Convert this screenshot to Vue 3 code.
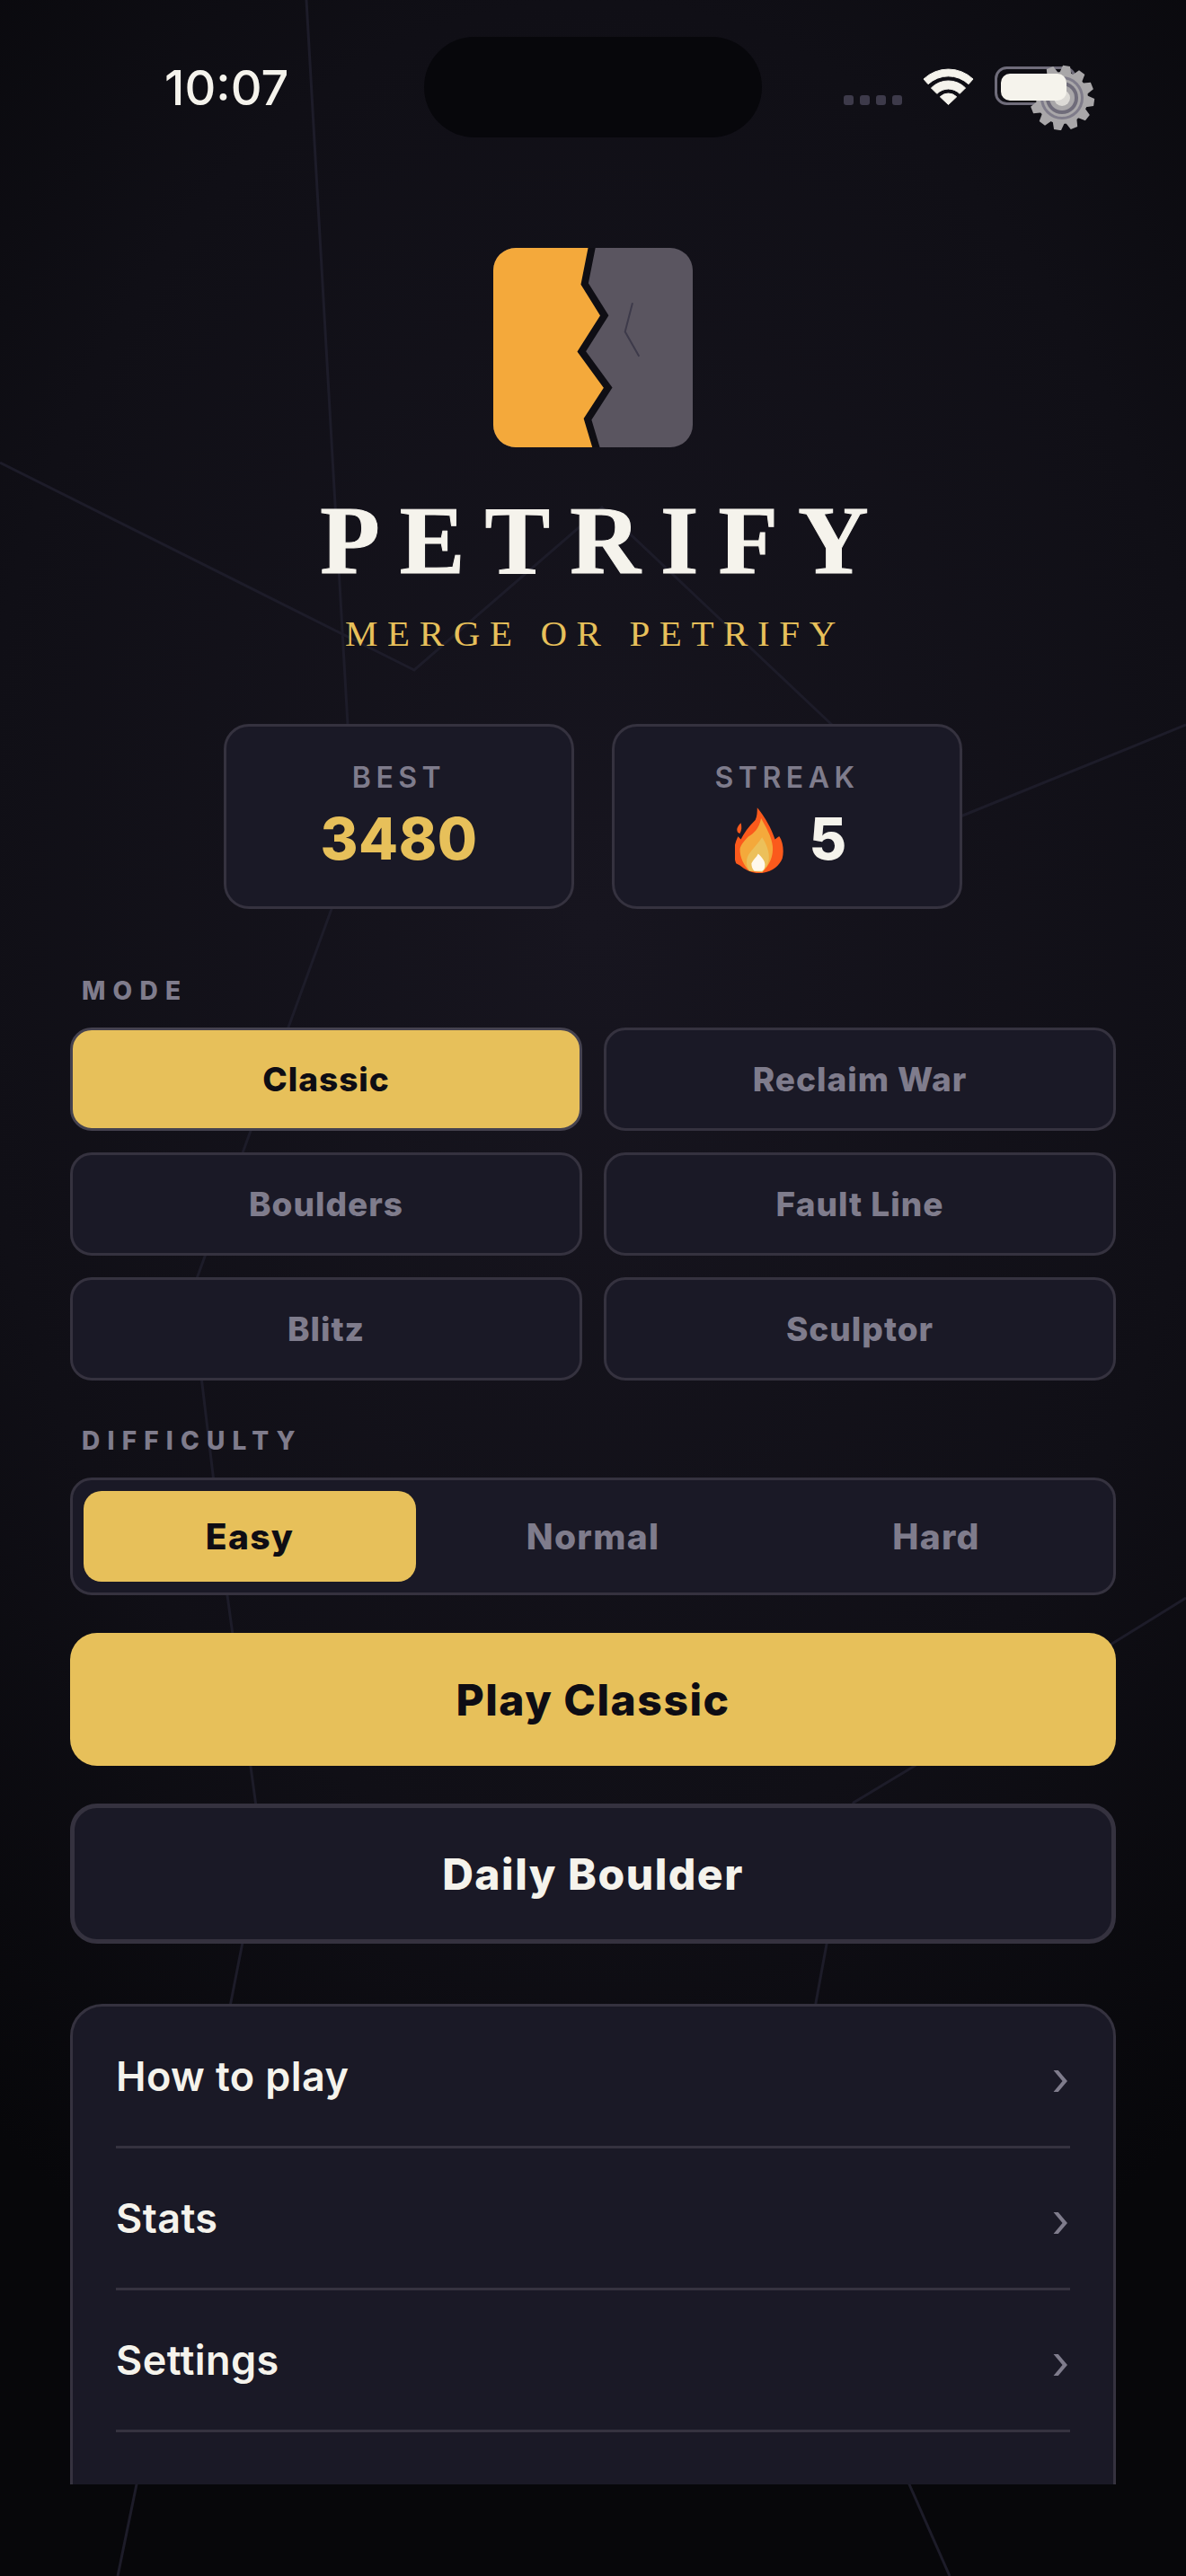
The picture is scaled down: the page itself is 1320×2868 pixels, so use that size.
<script setup>
const modes = [
  { name: 'Classic', active: true },
  { name: 'Reclaim War' },
  { name: 'Boulders' },
  { name: 'Fault Line' },
  { name: 'Blitz' },
  { name: 'Sculptor' },
]
const levels = [
  { name: 'Easy', active: true },
  { name: 'Normal' },
  { name: 'Hard' },
]
const menu = ['How to play', 'Stats', 'Settings']
const cracks = [
  '341,0 387,807 393,920 369,1012 213,1440 253,1776 291,2055 152,2766 131,2868',
  '0,515 461,746 670,565 926,807',
  '1320,807 1069,909',
  '1320,1779 1018,1966 950,2007 941,2050 908,2230 895,2400 1012,2766 1057,2868',
]
const teeth = Array.from({ length: 12 }, (_, i) => i * 30)
</script>

<template>
  <div class="app">
    <svg class="cracks" width="1320" height="2868" viewBox="0 0 1320 2868" aria-hidden="true">
      <polyline v-for="(c, i) in cracks" :key="i" :points="c" />
    </svg>

    <div class="screen">
      <header class="status">
        <span class="time">10:07</span>
        <span class="island"></span>
        <div class="status-icons">
          <div class="signal"><i></i><i></i><i></i><i></i></div>
          <svg class="wifi" width="57" height="42" viewBox="0 0 57 42">
            <g fill="#f5f3ec" stroke="#f5f3ec" stroke-width="1" stroke-linejoin="round">
              <path d="M1 13 A40 40 0 0 1 56 13 L51 18.7 A33 33 0 0 0 6 18.7 Z" />
              <path d="M9.4 22.9 A27 27 0 0 1 47.6 22.9 L41.2 29.3 A18 18 0 0 0 15.8 29.3 Z" />
              <path d="M19.3 32.8 A13 13 0 0 1 37.7 32.8 L28.5 41.5 Z" />
            </g>
          </svg>
          <svg class="battery" width="113" height="80" viewBox="0 0 113 80">
            <rect x="1.500" y="10.500" width="88" height="40" rx="12" fill="none" stroke="#6f6c7a" stroke-width="3" />
            <g transform="translate(75 44)">
              <polygon v-for="a in teeth" :key="a" points="-7,-26 -4,-36 4,-36 7,-26" fill="#a9a7a9" :transform="`rotate(${a + 8})`" />
              <circle r="29" fill="#a9a7a9" />
              <circle r="24" fill="#7f7c8a" />
              <circle r="21" fill="#a9a7a9" />
              <circle r="18" fill="#6f6c7a" />
              <circle r="14" fill="#a9a7a9" />
              <circle r="9" fill="#dcdad6" />
            </g>
            <rect x="7" y="17" width="73" height="30" rx="10" fill="#f5f3ec" />
          </svg>
        </div>
      </header>

      <main class="content">
        <div class="brand">
          <svg class="logo" width="222" height="222" viewBox="0 0 222 222">
            <defs>
              <clipPath id="logo-clip"><rect width="222" height="222" rx="25" /></clipPath>
            </defs>
            <g clip-path="url(#logo-clip)">
              <rect width="222" height="222" fill="#5a5560" />
              <path d="M0 0 H110 L101.7 40 L123.7 75.3 L98.3 115.3 L127.7 155.7 L105 190.7 L115 222 H0 Z" fill="#f4a93b" />
              <polyline points="110,-2 101.7,40 123.7,75.3 98.3,115.3 127.7,155.7 105,190.7 115,224" fill="none" stroke="#0f0e14" stroke-width="8" />
              <polyline points="155,61.3 146.7,93.3 162.3,120.7" fill="none" stroke="#3d3a4a" stroke-width="2" />
            </g>
          </svg>
          <h1 class="title">PETRIFY</h1>
          <p class="tagline">MERGE OR PETRIFY</p>
        </div>

        <div class="stats">
          <div class="stat">
            <span class="stat-label">BEST</span>
            <span class="stat-value gold">3480</span>
          </div>
          <div class="stat">
            <span class="stat-label">STREAK</span>
            <span class="stat-value streak">
              <svg class="flame" width="56" height="75" viewBox="22 18 52 70">
                <path fill="#fb5a1c" d="M45 20 C48 24 52 28 58 40 C61 46 63 52 63.500 53 C65 52 67 50 68 50 C72 56 73 66 71 73 C68 80 62 86 50 88 C42 89 34 86 27 80 L23 78 C20 70 20 60 25 50 L28 53 C31 47 36 40 43 33 C45 29 45 24 45 20 Z" />
                <path fill="#fb5a1c" d="M28 36 C24 40 23 43 25 46 L27 47 C29 43 29 40 28 36 Z" />
                <path fill="#f4a93b" d="M49 31 C54 40 60 50 61 60 C62 70 58 80 50 87 L37 86 C31 80 27 72 27 63 C28 58 33 53 36 50 C41 47 47 42 49 31 Z" />
                <path fill="#ecc05a" d="M50 51 C54 57 58 66 57 74 C56 80 53 84 50 87 L37 86 C34 82 33 76 35 71 C38 65 44 60 50 51 Z" />
                <path fill="#fff8ec" d="M46 68 C49 71 53 75 53 79 C53 83 52 85 50 86 L42 86 C40 84 39 81 39 78 C41 74 44 72 46 68 Z" />
              </svg>
              <span>5</span>
            </span>
          </div>
        </div>

        <div class="label mode-label">MODE</div>
        <div class="modes">
          <button v-for="m in modes" :key="m.name" class="mode" :class="{ on: m.active }">{{ m.name }}</button>
        </div>

        <div class="label diff-label">DIFFICULTY</div>
        <div class="segment">
          <button v-for="l in levels" :key="l.name" class="seg" :class="{ on: l.active }">{{ l.name }}</button>
        </div>

        <button class="cta play">Play Classic</button>
        <button class="cta daily">Daily Boulder</button>

        <nav class="menu">
          <a v-for="item in menu" :key="item" class="row">
            <span>{{ item }}</span>
            <span class="chev">›</span>
          </a>
        </nav>
      </main>
    </div>
  </div>
</template>

<style>
html, body { margin: 0; background: #07070a; }
</style>

<style scoped>
.app {
  position: relative;
  width: 1320px;
  height: 2868px;
  overflow: hidden;
  font-family: Inter, "Liberation Sans", sans-serif;
  color: #f5f3ec;
  background:
    radial-gradient(ellipse 85% 58% at 50% 36%, #17151f 0%, #100f16 62%, #07070a 100%);
}
.cracks { position: absolute; inset: 0; }
.cracks polyline { fill: none; stroke: #1d1c29; stroke-width: 3; }

.screen { position: relative; height: 2766px; overflow: hidden; }

.status {
  position: relative;
  height: 160px;
  display: flex;
  justify-content: space-between;
  padding: 0 100px 0 183px;
}
.time { font-size: 54px; font-weight: 500; line-height: 52px; margin-top: 72px; }
.island {
  position: absolute;
  left: 472px;
  top: 41px;
  width: 376px;
  height: 112px;
  border-radius: 56px;
  background: #07070b;
}
.status-icons { display: flex; gap: 23px; align-items: flex-start; }
.signal { display: flex; gap: 7px; margin-top: 106px; }
.signal i { width: 11px; height: 11px; border-radius: 3px; background: #3d3a4a; }
.wifi { margin-top: 75px; overflow: visible; }
.battery { margin-top: 65px; }

.content { padding: 0 78px; }

.brand { display: flex; flex-direction: column; align-items: center; padding-top: 116px; }
.logo { display: block; }
.title {
  margin: 46px 0 0;
  font-family: "Liberation Serif", serif;
  font-weight: 700;
  font-size: 109px;
  line-height: 116px;
  letter-spacing: 22px;
  padding-left: 25px;
  -webkit-text-stroke: 1px #f5f3ec;
  color: #f5f3ec;
}
.tagline {
  margin: 22px 0 0;
  font-family: "Liberation Serif", serif;
  font-size: 41px;
  line-height: 46px;
  letter-spacing: 10.6px;
  padding-left: 5px;
  color: #e7c05a;
}

.stats { display: flex; justify-content: center; gap: 42px; margin-top: 78px; }
.stat {
  box-sizing: border-box;
  width: 390px;
  height: 206px;
  border: 3px solid #35323f;
  border-radius: 28px;
  background: #1a1926;
  display: flex;
  flex-direction: column;
  align-items: center;
  padding-top: 38px;
}
.stat-label { font-size: 32px; line-height: 38px; font-weight: 600; letter-spacing: 5.5px; color: #7f7c8c; }
.stat-value { font-size: 64px; line-height: 78px; font-weight: 800; letter-spacing: 0.5px; margin-top: 10px; }
.gold { color: #e7c05a; }
.streak { display: flex; align-items: center; gap: 26px; padding-left: 9px; height: 78px; }
.flame { display: block; }

.label { font-size: 28px; line-height: 34px; font-weight: 800; letter-spacing: 8.2px; color: #7f7c8c; padding-left: 13px; }
.mode-label { margin-top: 74px; }
.modes { display: grid; grid-template-columns: 1fr 1fr; gap: 24px; margin-top: 24px; }
button { font-family: inherit; cursor: pointer; }
.mode {
  height: 115px;
  border: 3px solid #35323f;
  border-radius: 24px;
  background: #1a1926;
  color: #7f7c8c;
  font-size: 37px;
  font-weight: 800;
  letter-spacing: 1px;
}
.mode.on { background: #e7c05a; color: #0e0d14; border-color: #45424f; }

.diff-label { margin-top: 50px; }
.segment {
  box-sizing: border-box;
  height: 131px;
  margin-top: 24px;
  padding: 12px;
  display: grid;
  grid-template-columns: repeat(3, 1fr);
  gap: 12px;
  border: 3px solid #35323f;
  border-radius: 24px;
  background: #1a1926;
}
.seg {
  border: 0;
  border-radius: 20px;
  background: transparent;
  color: #7f7c8c;
  font-size: 39px;
  font-weight: 800;
  letter-spacing: 1.300px;
}
.seg.on { background: #e7c05a; color: #0e0d14; }

.cta {
  display: block;
  box-sizing: border-box;
  width: 100%;
  border-radius: 30px;
  font-size: 48px;
  font-weight: 800;
  letter-spacing: 1.500px;
}
.play { height: 148px; margin-top: 42px; border: 0; background: #e7c05a; color: #0e0d14; }
.daily { height: 156px; margin-top: 42px; border: 5px solid #35323f; background: #1a1926; color: #f5f3ec; }

.menu {
  margin-top: 67px;
  padding: 0 48px 120px;
  border: 3px solid #35323f;
  border-radius: 36px;
  background: #1a1926;
}
.row {
  box-sizing: border-box;
  height: 158px;
  display: flex;
  align-items: center;
  justify-content: space-between;
  border-bottom: 3px solid #35323f;
  font-size: 45px;
  font-weight: 600;
  letter-spacing: 0.4px;
}
.chev { font-size: 52px; font-weight: 400; color: #7f7c8c; margin-top: 6px; }
</style>
